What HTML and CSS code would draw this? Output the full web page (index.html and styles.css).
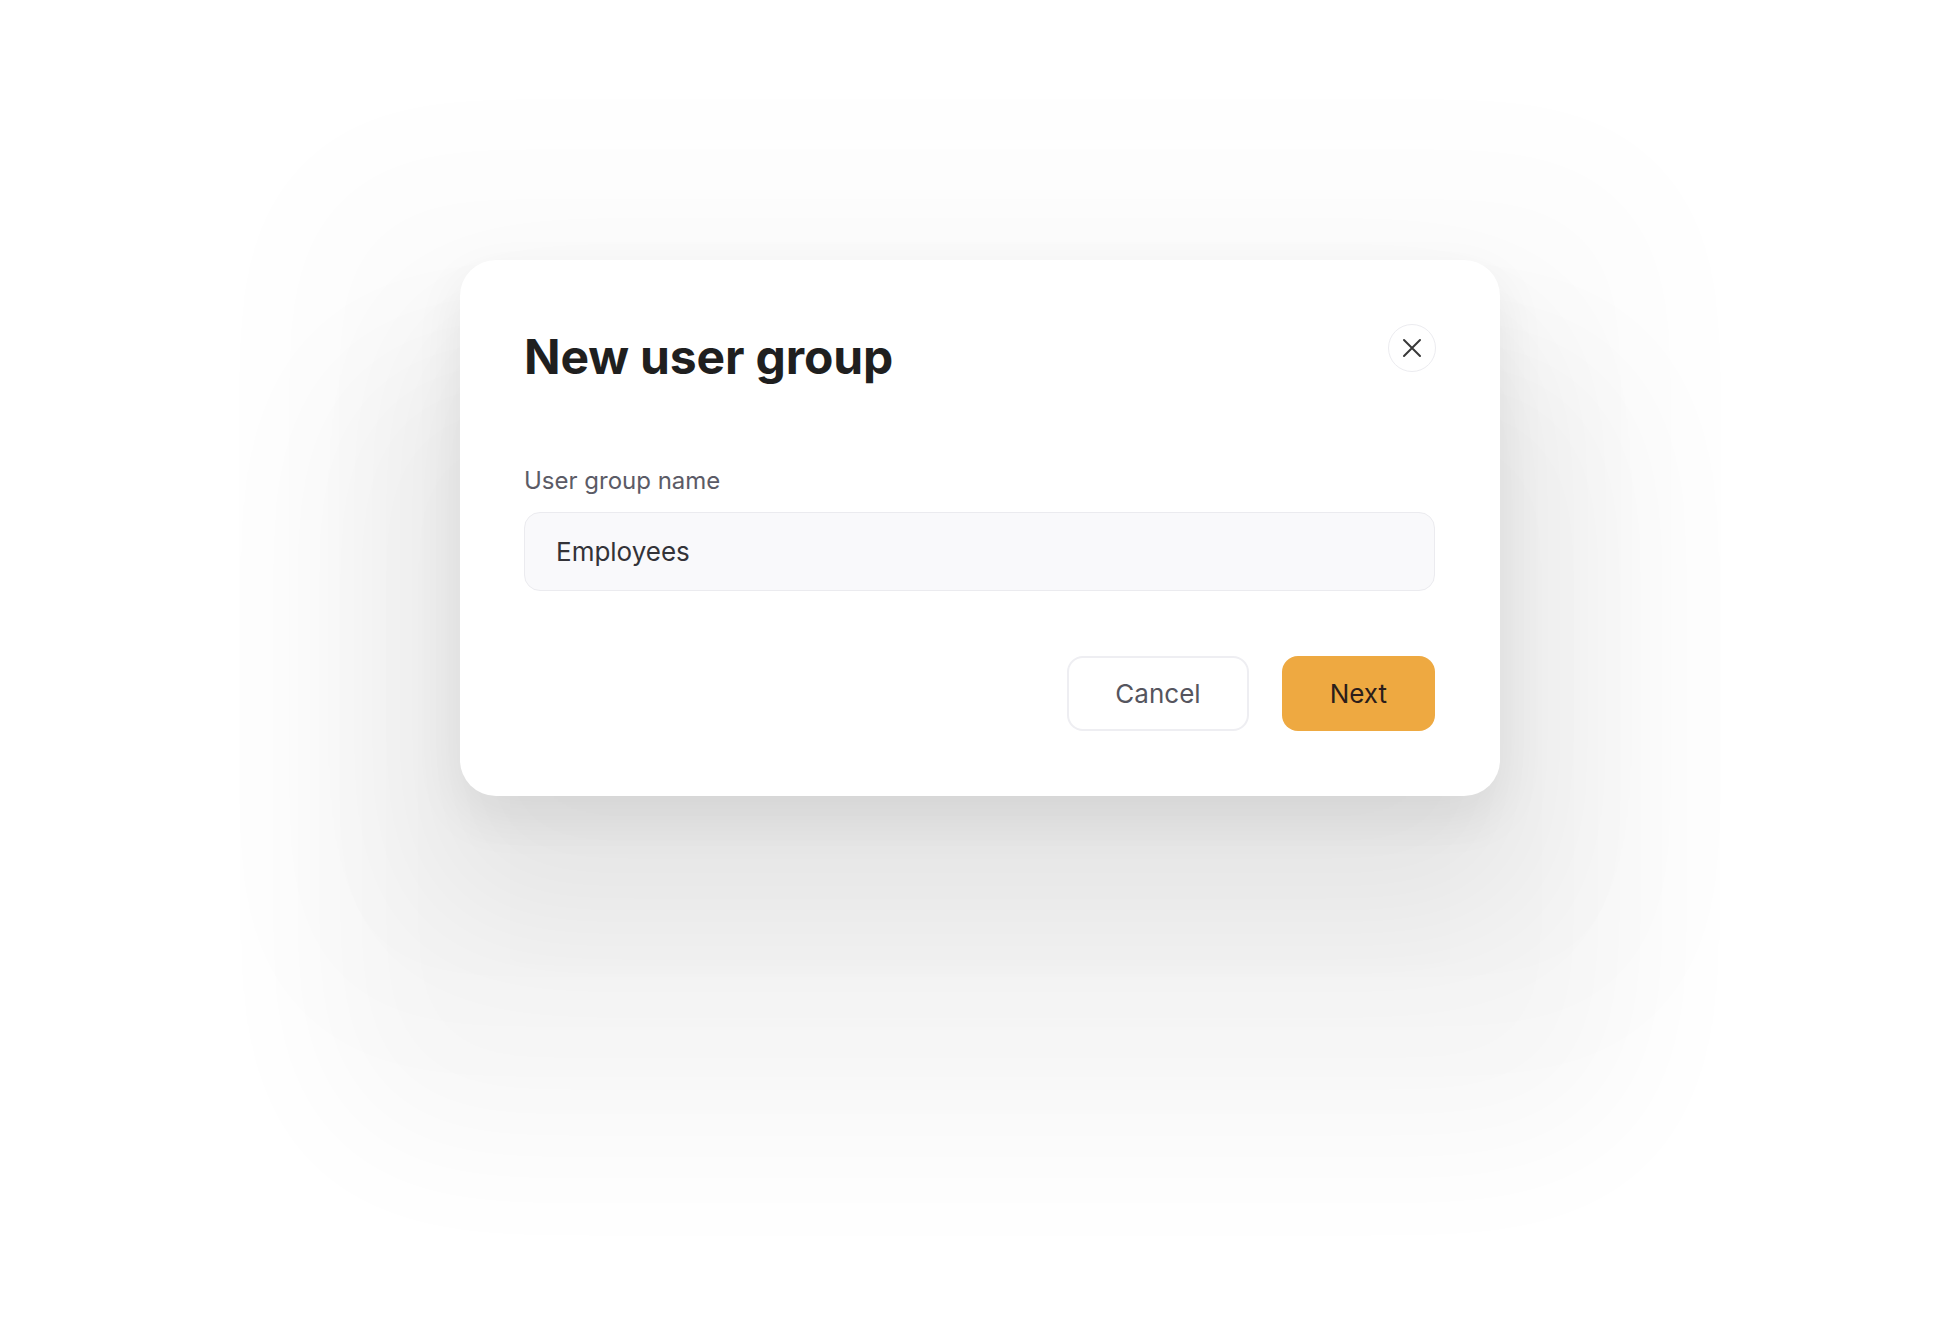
FILE: index.html
```html
<!DOCTYPE html>
<html lang="en">
<head>
<meta charset="utf-8">
<title>New user group</title>
<link rel="stylesheet" href="styles.css">
</head>
<body>
<div class="page">
  <div class="modal" role="dialog" aria-labelledby="modal-title">
    <div class="modal-header">
      <h1 class="modal-title" id="modal-title">New user group</h1>
      <button class="close-btn" type="button" aria-label="Close">
        <svg width="20" height="20" viewBox="0 0 20 20" fill="none" stroke="#383838" stroke-width="2" stroke-linecap="round">
          <path d="M2 2 L18 18 M18 2 L2 18"/>
        </svg>
      </button>
    </div>
    <div class="field">
      <label class="field-label" for="group-name">User group name</label>
      <input class="field-input" id="group-name" type="text" value="Employees">
    </div>
    <div class="actions">
      <button class="btn btn-secondary" type="button">Cancel</button>
      <button class="btn btn-primary" type="button">Next</button>
    </div>
  </div>
</div>
</body>
</html>
```

FILE: styles.css
```css
* { box-sizing: border-box; }

html, body {
  margin: 0;
  padding: 0;
  background: #ffffff;
  font-family: Inter, "Noto Sans", "Liberation Sans", sans-serif;
}

.page {
  width: 1960px;
  height: 1328px;
  overflow: hidden;
  display: flex;
  justify-content: center;
  align-items: flex-start;
  padding-top: 260px;
}

.modal {
  width: 1040px;
  background: #ffffff;
  border-radius: 36px;
  padding: 64px 65px 65px 64px;
  box-shadow:
    0 20px 50px rgba(0, 0, 0, 0.07),
    0 90px 140px 30px rgba(0, 0, 0, 0.06),
    0 220px 150px 130px rgba(0, 0, 0, 0.035),
    0 60px 150px 170px rgba(0, 0, 0, 0.015);
}

.modal-header {
  display: flex;
  justify-content: space-between;
  align-items: flex-start;
}

.modal-title {
  margin: 4px 0 0 0;
  font-size: 48px;
  line-height: 58px;
  font-weight: 700;
  color: #1f1f1f;
  letter-spacing: -0.15px;
}

.close-btn {
  width: 48px;
  height: 48px;
  border-radius: 50%;
  border: 1px solid #ececf0;
  background: #ffffff;
  display: flex;
  align-items: center;
  justify-content: center;
  padding: 0;
  margin-right: -1px;
}

.field {
  display: flex;
  flex-direction: column;
  margin-top: 80px;
}

.field-label {
  font-size: 24px;
  line-height: 29px;
  color: #5b5b66;
  margin-bottom: 17px;
}

.field-input {
  height: 79px;
  width: 100%;
  border: 1px solid #ebebef;
  border-radius: 16px;
  background: #f9f9fb;
  padding: 0 31px;
  font-family: inherit;
  font-size: 26px;
  color: #333338;
  outline: none;
}

.actions {
  display: flex;
  justify-content: flex-end;
  gap: 33px;
  margin-top: 65px;
}

.btn {
  height: 75px;
  padding: 0 46px;
  border-radius: 16px;
  font-family: inherit;
  font-size: 26px;
  display: flex;
  align-items: center;
  justify-content: center;
}

.btn-secondary {
  background: #ffffff;
  border: 2px solid #eeeef2;
  color: #55555e;
}

.btn-primary {
  background: #eea941;
  border: none;
  color: #2b1d1a;
  padding: 0 48px;
}
```
